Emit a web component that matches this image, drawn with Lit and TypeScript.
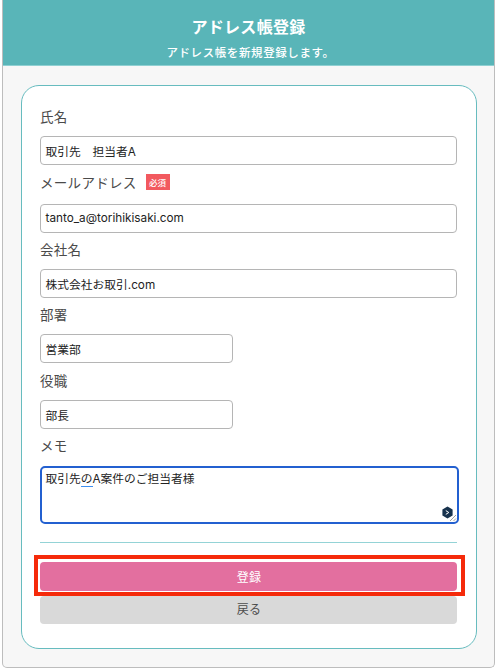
import { LitElement, html, css } from "lit";
import { customElement } from "lit/decorators.js";

@customElement("app-root")
export class AppRoot extends LitElement {
  static styles = css`
    :host {
      display: block;
      width: 500px;
      height: 669px;
      background: #ffffff;
      font-family: Inter, "Noto Sans CJK JP", sans-serif;
      color: #444;
      overflow: hidden;
    }
    .shell {
      box-sizing: border-box;
      margin-left: 2px;
      width: 493px;
      height: 668px;
      border: 1px solid #bdbdbd;
      border-top: none;
      border-radius: 0 0 5px 5px;
      background: #f7f7f7;
    }
    .head {
      height: 66px;
      background: #59b5b8;
      color: #fff;
      text-align: center;
      box-sizing: border-box;
      padding-top: 16px;
      border-bottom: 1px solid #8fd0d2;
    }
    .head h1 {
      margin: 0;
      font-size: 16px;
      line-height: 22px;
      font-weight: 700;
      letter-spacing: 0.3px;
    }
    .head p {
      margin: 7px 0 0;
      padding-left: 4px;
      font-size: 11.5px;
      line-height: 16px;
      font-weight: 500;
      letter-spacing: 0.6px;
    }
    .card {
      box-sizing: border-box;
      margin: 19px 0 0 18px;
      width: 456px;
      height: 564px;
      background: #fff;
      border: 1px solid #67bcbf;
      border-radius: 18px;
      padding: 15px 18px 0;
      position: relative;
    }
    .field {
      display: flex;
      flex-direction: column;
      align-items: flex-start;
    }
    .label {
      box-sizing: border-box;
      display: flex;
      align-items: center;
      height: 35px;
      padding-bottom: 5px;
      font-size: 13.5px;
      letter-spacing: 0.3px;
      color: #4a4a4a;
    }
    .label.mail { height: 37.5px; padding-bottom: 6px; }
    .label.memo-label { height: 36px; padding-bottom: 6px; }
    .req {
      margin-left: 9px;
      width: 24px;
      height: 16px;
      background: #f2595f;
      color: #fff;
      font-size: 8.5px;
      font-weight: 500;
      letter-spacing: 0;
      display: flex;
      align-items: center;
      justify-content: center;
    }
    .input {
      box-sizing: border-box;
      width: 417px;
      height: 29px;
      border: 1px solid #b5b5b5;
      border-radius: 4px;
      background: #fff;
      font-size: 11.75px;
      color: #222;
      display: flex;
      align-items: center;
      padding-left: 4.5px;
      margin-bottom: 1.25px;
    }
    .short { width: 193px; }
    .memo {
      box-sizing: border-box;
      width: 419px;
      height: 58px;
      border: 2px solid #2360d0;
      border-radius: 5px;
      padding: 3px 3.5px;
      font-size: 11.75px;
      line-height: 16px;
      color: #222;
      position: relative;
    }
    .sq { border-bottom: 1px solid #3d8ff0; }
    .badge {
      position: absolute;
      right: 1px;
      bottom: 0;
      width: 18px;
      height: 18px;
      border-radius: 50%;
      background: #fff;
      display: flex;
      align-items: center;
      justify-content: center;
    }
    .grip {
      position: absolute;
      right: 0;
      bottom: 0;
    }
    .rule {
      height: 1px;
      background: #94d3d6;
      width: 417px;
      margin-top: 18px;
    }
    .btn {
      width: 417px;
      height: 29px;
      border-radius: 4px;
      display: flex;
      align-items: center;
      justify-content: center;
      font-size: 12px;
      letter-spacing: 0.3px;
      padding-left: 1px;
      box-sizing: border-box;
    }
    .ok {
      margin-top: 19px;
      background: #e36f9f;
      color: #fff;
    }
    .back {
      margin-top: 5px;
      height: 28px;
      padding-bottom: 3px;
      background: #d9d9d9;
      color: #4d4d4d;
    }
    .mark {
      position: absolute;
      left: 12px;
      top: 469px;
      width: 431px;
      height: 41px;
      box-sizing: border-box;
      border: 4px solid #f52a0a;
      pointer-events: none;
    }
  `;

  render() {
    return html`
      <div class="shell">
        <header class="head">
          <h1>アドレス帳登録</h1>
          <p>アドレス帳を新規登録します。</p>
        </header>
        <section class="card">
          <div class="field">
            <div class="label">氏名</div>
            <div class="input">取引先　担当者A</div>
          </div>
          <div class="field">
            <div class="label mail">メールアドレス<span class="req">必須</span></div>
            <div class="input">tanto_a@torihikisaki.com</div>
          </div>
          <div class="field">
            <div class="label">会社名</div>
            <div class="input">株式会社お取引.com</div>
          </div>
          <div class="field">
            <div class="label">部署</div>
            <div class="input short">営業部</div>
          </div>
          <div class="field">
            <div class="label">役職</div>
            <div class="input short">部長</div>
          </div>
          <div class="field">
            <div class="label memo-label">メモ</div>
            <div class="memo">
              取引先<span class="sq">の</span>A案件のご担当者様
              <span class="badge">
                <svg width="13" height="13" viewBox="0 0 13 13">
                  <path d="M6.5 .6 11.6 3.5V9.5L6.5 12.4 1.4 9.5V3.5Z" fill="#17324d" />
                  <path d="M4.8 4.6 7.8 6.5 4.8 8.4" fill="none" stroke="#fff" stroke-width="1" />
                </svg>
              </span>
              <svg class="grip" width="8" height="8" viewBox="0 0 8 8">
                <path d="M1 7 7 1M4.5 7 7 4.5" stroke="#8a8a8a" stroke-width="0.8" />
              </svg>
            </div>
          </div>
          <div class="rule"></div>
          <div class="btn ok">登録</div>
          <div class="btn back">戻る</div>
          <div class="mark"></div>
        </section>
      </div>
    `;
  }
}
